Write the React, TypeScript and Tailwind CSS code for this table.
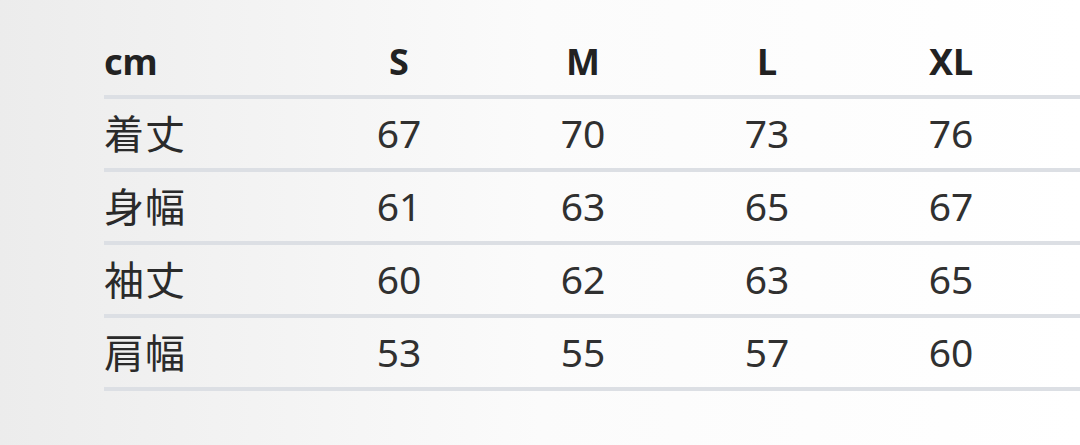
const sizes = ['S', 'M', 'L', 'XL'];

const rows: { label: string; values: number[] }[] = [
  { label: '着丈', values: [67, 70, 73, 76] },
  { label: '身幅', values: [61, 63, 65, 67] },
  { label: '袖丈', values: [60, 62, 63, 65] },
  { label: '肩幅', values: [53, 55, 57, 60] },
];

const rowClass =
  'grid grid-cols-[203px_184px_184px_184px_184px_1fr] h-[73px] items-center border-b-4 border-[#dcdfe4]';

export default function App() {
  return (
    <div
      className="w-[1080px] h-[445px] overflow-hidden bg-gradient-to-r from-[#ececec] via-[#fbfbfb] to-white pt-[26px] pl-[104px] text-[#2a2a2a]"
      style={{ fontFamily: '"Noto Sans", "Noto Sans CJK JP", sans-serif' }}
    >
      <div className={rowClass}>
        <span className="text-[36px] font-bold text-[#222] pt-[3px]">cm</span>
        {sizes.map((s) => (
          <span key={s} className="text-center text-[36px] font-bold text-[#222] pt-[3px]">
            {s}
          </span>
        ))}
        <span />
      </div>
      {rows.map((r) => (
        <div key={r.label} className={rowClass}>
          <span className="text-[40px] tracking-[1px]">{r.label}</span>
          {r.values.map((v, i) => (
            <span key={i} className="text-center text-[39px] text-[#303030]">
              {v}
            </span>
          ))}
          <span />
        </div>
      ))}
    </div>
  );
}
